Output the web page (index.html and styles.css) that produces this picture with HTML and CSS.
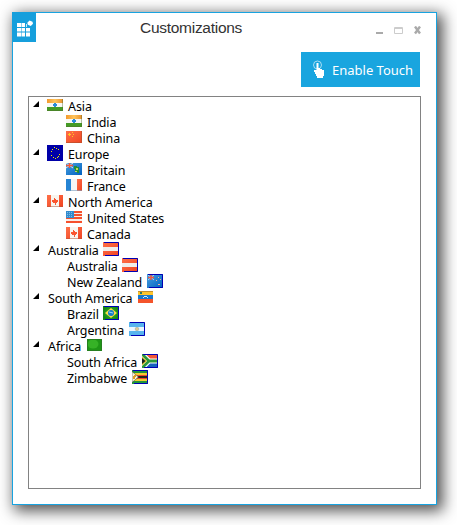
FILE: index.html
```html
<!DOCTYPE html>
<html lang="en">
<head>
<meta charset="utf-8">
<title>Customizations</title>
<link rel="stylesheet" href="styles.css">
</head>
<body>
<svg class="defs" aria-hidden="true">
  <defs>
    <linearGradient id="orange" x2="1"><stop stop-color="#f39a2e"/><stop offset=".5" stop-color="#ffc45c"/><stop offset="1" stop-color="#e8902c"/></linearGradient>
    <linearGradient id="red" x2="1" y2="1"><stop stop-color="#ff7048"/><stop offset="1" stop-color="#f04422"/></linearGradient>
    <linearGradient id="blue" x2="1" y2="1"><stop stop-color="#48a0e0"/><stop offset="1" stop-color="#0060c0"/></linearGradient>
    <radialGradient id="green"><stop stop-color="#3ebc30"/><stop offset="1" stop-color="#168712"/></radialGradient>
  </defs>
  <symbol id="india" viewBox="0 0 16 12"><path fill="url(#orange)" d="M0 0h16v4H0z"/><path fill="#f8f8f4" d="M0 4h16v4H0z"/><path fill="#459b25" d="M0 8h16v4H0z"/><path fill="#2b8bd8" d="M7 4h2v1h1v2H9v1H7V7H6V5h1z"/><path fill="none" stroke="#50642e" stroke-opacity=".4" d="M0 11.5h15.5V0"/></symbol>
  <symbol id="china" viewBox="0 0 16 12"><path fill="url(#red)" d="M0 0h16v12H0z"/><path fill="#ffc821" d="M2 3h1V2h1v1h1v1H4v1H3V4H2zM6 1h1v1H6zM7 3h1v1H7zM6 5h1v1H6z"/><path fill="none" stroke="#b8502c" stroke-opacity=".7" d="M0 11.5h15.5V0"/></symbol>
  <symbol id="europe" viewBox="0 0 16 16"><path fill="#0000a8" d="M0 0h16v16H0z"/><path fill="#f4ed00" d="M7 2h1v1H7zM9 3h1v1H9zM5 4h1v1H5zM11 4h1v1h-1zM4 6h1v1H4zM12 9h1v1h-1zM4 10h1v1H4zM11 11h1v1h-1zM6 12h1v1H6zM8 13h1v1H8zM10 12h1v1h-1z"/></symbol>
  <symbol id="britain" viewBox="0 0 16 12"><path fill="url(#blue)" d="M0 0h16v12H0z"/><path stroke="#fff" stroke-opacity=".8" d="m0 0 7 5M7 0 0 5"/><path stroke="#f1583d" stroke-width="1.4" d="M3.5 0v5M0 2.5h7"/><path fill="#218f39" d="M8 3h3v1h2v6h-2V9H9V6H8z"/><path fill="#c7d85b" d="M10 5h2v2h-2zM9 8h2v1H9z"/></symbol>
  <symbol id="france" viewBox="0 0 16 12"><path fill="#2584d4" d="M0 0h5v12H0z"/><path fill="#f6f6f4" d="M5 0h6v12H5z"/><path fill="url(#red)" d="M11 0h5v12h-5z"/><path stroke="#7da0c0" stroke-opacity=".6" d="M0 11.5h16"/></symbol>
  <symbol id="canada" viewBox="0 0 16 12"><path fill="#f7f5ef" d="M0 0h16v12H0z"/><path fill="url(#red)" d="M0 0h4v12H0zM12 0h4v12h-4z"/><path fill="#fa5630" d="M7 3h1v1h1v1h2v2h-1v1H9v2H8V8H6V7H5V5h2z"/><path stroke="#ae553b" stroke-opacity=".5" d="M0 11.5h16"/></symbol>
  <symbol id="usa" viewBox="0 0 16 12"><path fill="#f8eee8" d="M0 0h16v12H0z"/><path fill="#f6502c" d="M0 0h16v2H0zM0 3h16v2H0zM0 6h16v2H0zM0 10h16v2H0z"/><path fill="#338bce" d="M0 0h8v7H0z"/><path stroke="#7dbbe5" stroke-dasharray="1 1" d="M1 1.5h6M1 3.5h6M1 5.5h6"/></symbol>
  <symbol id="austria" viewBox="0 0 16 14"><path fill="url(#red)" d="M0 0h16v14H0z"/><path fill="#f0eeeb" d="M0 5h15v4H0z"/><path fill="none" stroke="#0000b5" d="M1 .5h14.5v13H2"/></symbol>
  <symbol id="newzealand" viewBox="0 0 16 14"><path fill="url(#blue)" d="M0 0h16v14H0z"/><path stroke="#dceeff" stroke-opacity=".7" d="m1 1 6 5M7 1 1 6"/><path stroke="#f1583d" stroke-width="1.4" d="M4 1v5M1 3.5h6"/><path fill="#f5ac9a" d="M11 3h1v1h-1zM9 6h1v1H9zM13 5h1v1h-1zM11 10h2v1h-2z"/><path fill="none" stroke="#0000b5" d="M1 .5h14.5v13H2"/></symbol>
  <symbol id="venezuela" viewBox="0 0 15 12"><path fill="#ffc52d" d="M0 0h15v4H0z"/><path fill="#1878cf" d="M0 4h15v4H0z"/><path fill="#f4542b" d="M0 8h15v4H0z"/><path fill="#2f7860" d="M2 1h2v2H2z"/><path fill="#d2e8f5" d="M5 6h1V5h3v1h1v1H9V6H6v1H5z"/><path stroke="#9a6c30" stroke-opacity=".6" d="M0 .5h15"/></symbol>
  <symbol id="brazil" viewBox="0 0 16 14"><path fill="url(#green)" d="M0 0h16v14H0z"/><path fill="#ffdf45" d="m8 2 6 5-6 5-6-5z"/><circle cx="8" cy="7" r="3" fill="#177bc8"/><path stroke="#9edaf1" d="m6 6 4 1"/><path fill="none" stroke="#0000b5" d="M1 .5h14.5v13H2"/></symbol>
  <symbol id="argentina" viewBox="0 0 16 14"><path fill="#58b4ee" d="M0 0h16v14H0z"/><path fill="#eaf6ff" d="M0 5h16v4H0z"/><circle cx="8" cy="7" r="1.8" fill="#e1c790" stroke="#8ba29c" stroke-width=".5"/><path fill="none" stroke="#0000b5" d="M1 .5h14.5v13H2"/></symbol>
  <symbol id="libya" viewBox="0 0 15 12"><path fill="#1f9616" d="M0 0h15v12H0z"/><ellipse cx="6" cy="5" rx="5.5" ry="4.5" fill="#36b226"/><path fill="none" stroke="#267f20" d="M.5.5h14v11H.5z"/></symbol>
  <symbol id="southafrica" viewBox="0 0 16 14"><path fill="#f15636" d="M0 0h16v7H0z"/><path fill="#1763bf" d="M0 7h16v7H0z"/><path fill="none" stroke="#fff" stroke-width="5" d="m0 0 7 7-7 7M7 7h9"/><path fill="none" stroke="#2b983b" stroke-width="2.8" d="m0 0 7 7-7 7M7 7h9"/><path fill="#e7bd29" d="m0 2.5 5 4.5-5 4.5z"/><path fill="#142121" d="m0 4 3.5 3L0 10z"/><path fill="none" stroke="#0000b5" d="M1 .5h14.5v13H2"/></symbol>
  <symbol id="zimbabwe" viewBox="0 0 16 14"><path fill="#209638" d="M0 0h16v14H0z"/><path fill="#f2cc32" d="M0 3h16v8H0z"/><path fill="#ef4c2c" d="M0 5h16v4H0z"/><path fill="#25271c" d="M5 6h11v2H5z"/><path fill="#f5f3df" stroke="#38392d" stroke-width=".5" d="m0 1.5 6.5 5.5L0 12.5z"/><path fill="#df9b22" d="M1 6h1V5h2v2H3v2H1z"/><path fill="none" stroke="#0000b5" d="M1 .5h14.5v13H2"/></symbol>
  <symbol id="arrow" viewBox="0 0 7 7"><path d="M6 0v6H0z"/></symbol>
</svg>
<main class="window">
  <header class="titlebar">
    <div class="app-icon"><svg width="24" height="30" viewBox="0 0 24 30"><path fill="#fff" d="M5 11h4v4H5zM9.5 11H13v4H9.5zM5 16h4v3.5H5zM9.5 16H13v3.5H9.5zM14 16h4v3.5h-4zM5 20.5h4v4H5zM9.5 20.5H13v4H9.5zM14 20.5h4v4h-4zM17.5 8.5l3 1.2.5 2-2.2 2.3-3-1.2-.5-2z"/><path fill="#c7e9f8" d="M14 12h1v3h-1z"/></svg></div>
    <h1 class="title">Customizations</h1>
    <svg class="controls" width="46" height="10" viewBox="0 0 46 10"><path fill="#aaa" d="M0 6h7v2H0z"/><path fill="none" stroke="#ccc" d="M18.5 1.5h8v6h-8z"/><path stroke="#ccc" d="M18 2.5h9"/><path stroke="#aaa" stroke-width="2.4" d="m39 .5 5 7m0-7-5 7"/></svg>
  </header>
  <div class="toolbar">
    <button class="touch"><svg width="13" height="18" viewBox="0 0 13 18"><circle cx="5.5" cy="5" r="4" fill="none" stroke="#a8ddf3"/><path fill="#fff" d="M4.5 3h2v5H8v1h2v1h2v6h-1v2H5v-2H4v-2H3v-2H2v-2h2.5z"/></svg><span>Enable Touch</span></button>
  </div>
  <ul class="tree">
    <li><div class="row"><svg class="arrow"><use href="#arrow"/></svg><svg class="flag"><use href="#india"/></svg><span class="label">Asia</span></div>
      <ul><li class="row"><svg class="flag"><use href="#india"/></svg><span class="label">India</span></li><li class="row"><svg class="flag"><use href="#china"/></svg><span class="label">China</span></li></ul></li>
    <li><div class="row"><svg class="arrow"><use href="#arrow"/></svg><svg class="flag square"><use href="#europe"/></svg><span class="label">Europe</span></div>
      <ul><li class="row"><svg class="flag"><use href="#britain"/></svg><span class="label">Britain</span></li><li class="row"><svg class="flag"><use href="#france"/></svg><span class="label">France</span></li></ul></li>
    <li><div class="row"><svg class="arrow"><use href="#arrow"/></svg><svg class="flag"><use href="#canada"/></svg><span class="label">North America</span></div>
      <ul><li class="row"><svg class="flag"><use href="#usa"/></svg><span class="label">United States</span></li><li class="row"><svg class="flag"><use href="#canada"/></svg><span class="label">Canada</span></li></ul></li>
    <li class="trailing"><div class="row"><svg class="arrow"><use href="#arrow"/></svg><span class="label">Australia</span><svg class="flag tall"><use href="#austria"/></svg></div>
      <ul><li class="row"><span class="label">Australia</span><svg class="flag tall"><use href="#austria"/></svg></li><li class="row"><span class="label">New Zealand</span><svg class="flag tall"><use href="#newzealand"/></svg></li></ul></li>
    <li class="trailing"><div class="row"><svg class="arrow"><use href="#arrow"/></svg><span class="label">South America</span><svg class="flag narrow"><use href="#venezuela"/></svg></div>
      <ul><li class="row"><span class="label">Brazil</span><svg class="flag tall"><use href="#brazil"/></svg></li><li class="row"><span class="label">Argentina</span><svg class="flag tall"><use href="#argentina"/></svg></li></ul></li>
    <li class="trailing"><div class="row"><svg class="arrow"><use href="#arrow"/></svg><span class="label">Africa</span><svg class="flag narrow"><use href="#libya"/></svg></div>
      <ul><li class="row"><span class="label">South Africa</span><svg class="flag tall"><use href="#southafrica"/></svg></li><li class="row"><span class="label">Zimbabwe</span><svg class="flag tall"><use href="#zimbabwe"/></svg></li></ul></li>
  </ul>
</main>
</body>
</html>
```
FILE: styles.css
```css
* { box-sizing: border-box; }
body { margin: 0; padding: 12px; height: 525px; overflow: hidden; background: #fff; font-family: "Noto Sans", sans-serif; }
.defs { position: absolute; width: 0; height: 0; }
.window { width: 425px; height: 493px; border: 1px solid #18a3e0; background: #fff; box-shadow: 4px 4px 14px 2px rgba(0, 0, 0, .68); }
.titlebar { display: flex; align-items: flex-start; height: 39px; }
.app-icon { width: 24px; height: 30px; margin: -1px 0 0 -1px; background: #169fdc; }
.app-icon svg { display: block; }
.title { margin: 5px 0 0 104px; flex: 1; font: 15.5px/20px "Liberation Sans", sans-serif; letter-spacing: -.28px; color: #333; }
.controls { flex: none; margin: 13px 14px 0 0; }
.toolbar { display: flex; justify-content: flex-end; padding-right: 16px; height: 44px; }
.touch { display: flex; align-items: center; width: 119px; height: 35px; margin: 0; padding: 0 0 0 11px; gap: 7px; border: 0; background: #19a5df; color: #fff; font: 13px/20px "Noto Sans", sans-serif; white-space: nowrap; }
.touch svg { flex: none; margin-top: -1px; }
.tree, .tree ul { list-style: none; margin: 0; padding: 0; }
.tree { width: 393px; height: 393px; margin-left: 15px; border: 1px solid #828282; padding: 1px 0 0 3px; background: #fff; }
.row { display: flex; align-items: center; height: 16px; }
.tree ul .row { padding-left: 34px; }
.arrow { width: 7px; height: 7px; margin: -3px 7px 0 1px; flex: none; }
.flag { width: 16px; height: 12px; margin-top: -2px; flex: none; }
.square { height: 16px; }
.tall { height: 14px; }
.narrow { width: 15px; margin-left: 1px; }
.label { margin: 2px 0 0 5px; font-size: 12.5px; letter-spacing: -.1px; line-height: 16px; color: #000; white-space: nowrap; }
.tree { padding-top: 1px; }
.trailing .label { margin: 2px 4.5px 0 0; }
.trailing .arrow { margin-right: 8px; }
.tree .trailing ul .row { padding-left: 35px; }
```
